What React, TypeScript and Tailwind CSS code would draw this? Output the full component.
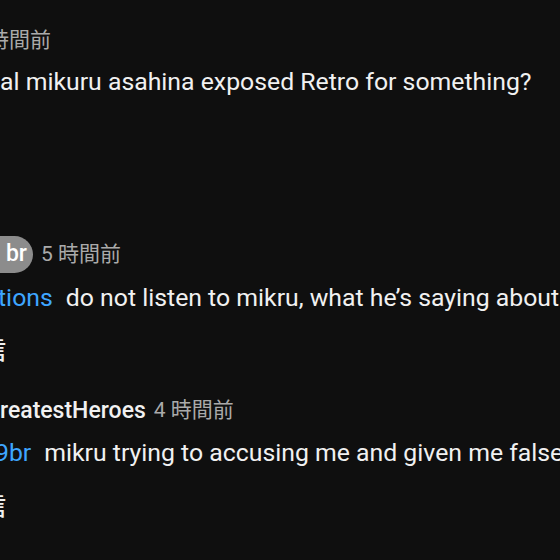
import React from "react";

const font = "font-['Roboto','Noto_Sans_CJK_JP',sans-serif]";

export default function App() {
  return (
    <div className={`w-[560px] h-[560px] overflow-hidden bg-[#0f0f0f] ${font}`}>
      <div className="pt-[25px] flex flex-col">
        {/* top-level comment (cut) */}
        <div className="h-[30px] leading-[30px] text-[21px] text-[#aaaaaa] whitespace-nowrap ml-[-12px]">時間前</div>
        <div className="mt-[10px] h-[34px] leading-[34px] text-[24.8px] text-[#f1f1f1] whitespace-nowrap">
          al mikuru asahina exposed Retro for something?
        </div>

        {/* reply 1 */}
        <div className="mt-[137px] h-[37px] flex items-center whitespace-nowrap">
          <span className="h-[37px] w-[70px] ml-[-37px] rounded-full bg-[#8c8c8c] flex items-center justify-end pr-[6px] text-[23px] font-medium text-white">
            br
          </span>
          <span className="ml-[8px] text-[21px] text-[#aaaaaa]">5 時間前</span>
        </div>
        <div className="mt-[8px] h-[34px] leading-[34px] text-[24.8px] text-[#f1f1f1] whitespace-nowrap">
          <span className="text-[#3ea6ff] ml-[-2px]">tions</span>
          <span className="ml-[13px]">do not listen to mikru, what he’s saying about me is false</span>
        </div>
        <div className="mt-[19px] h-[34px] leading-[34px] text-[24px] font-medium text-[#f1f1f1] whitespace-nowrap ml-[-18px]">信</div>

        {/* reply 2 */}
        <div className="mt-[28px] h-[30px] flex items-center whitespace-nowrap">
          <span className="text-[23px] font-medium text-[#f1f1f1] ml-[0px]">reatestHeroes</span>
          <span className="ml-[8px] text-[21px] text-[#aaaaaa]">4 時間前</span>
        </div>
        <div className="mt-[10px] h-[34px] leading-[34px] text-[24.8px] text-[#f1f1f1] whitespace-nowrap">
          <span className="text-[#3ea6ff] ml-[-5px]">9br</span>
          <span className="ml-[13px]">mikru trying to accusing me and given me false information</span>
        </div>
        <div className="mt-[20px] h-[34px] leading-[34px] text-[24px] font-medium text-[#f1f1f1] whitespace-nowrap ml-[-18px]">信</div>
      </div>
    </div>
  );
}
